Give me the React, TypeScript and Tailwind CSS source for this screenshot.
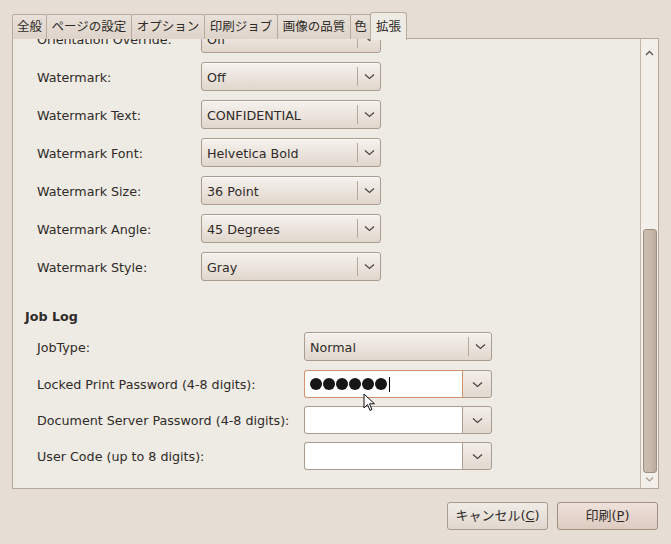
import React from 'react';

const font = { fontFamily: '"DejaVu Sans", "Noto Sans CJK JP", sans-serif' };

const tabs = [
  { label: '全般', w: 'w-[35px]' },
  { label: 'ページの設定', w: 'w-[86px]' },
  { label: 'オプション', w: 'w-[74px]' },
  { label: '印刷ジョブ', w: 'w-[74px]' },
  { label: '画像の品質', w: 'w-[74px]' },
  { label: '色', w: 'w-[21px]' },
];

const Chevron = () => (
  <svg width="11" height="7" viewBox="0 0 11 7" className="block">
    <path d="M1 1.5 L5.5 5.5 L10 1.5" fill="none" stroke="#4a4540" strokeWidth="1.2" />
  </svg>
);

const Combo = ({ value, w = 'w-[180px]' }: { value: string; w?: string }) => (
  <div className={`${w} h-[29px] flex items-center rounded-[3px] border border-[#aa9c8f] bg-gradient-to-b from-[#f5f1ed] via-[#ece5de] to-[#e0d6cc] shadow-[inset_0_1px_0_#fbf9f7]`}>
    <span className="flex-1 pl-[5px] pt-[2px] text-[12.7px] leading-[16px] text-[#2f2b28] truncate">{value}</span>
    <span className="w-px h-[19px] bg-[#b4a89c]" />
    <span className="w-[22px] flex justify-center">
      <Chevron />
    </span>
  </div>
);

const EntryCombo = ({ focused, children }: { focused?: boolean; children?: React.ReactNode }) => (
  <div className="w-[188px] h-[28px] flex rounded-[3px] border border-[#aa9c8f] bg-gradient-to-b from-[#f3eee9] to-[#e2d9cf]">
    <div
      className={`w-[159px] -m-px h-[28px] flex items-center pl-[5px] bg-white rounded-l-[3px] border ${
        focused ? 'border-[#d0916b]' : 'border-[#aa9c8f]'
      }`}
    >
      {children}
    </div>
    <span className="flex-1 flex items-center justify-center pl-[2px]">
      <Chevron />
    </span>
  </div>
);

const Label = ({ w, children }: { w: string; children: React.ReactNode }) => (
  <span className={`${w} pt-[2px] text-[12.7px] leading-[16px]`}>{children}</span>
);

const watermarkRows = [
  ['Orientation Override:', 'Off'],
  ['Watermark:', 'Off'],
  ['Watermark Text:', 'CONFIDENTIAL'],
  ['Watermark Font:', 'Helvetica Bold'],
  ['Watermark Size:', '36 Point'],
  ['Watermark Angle:', '45 Degrees'],
  ['Watermark Style:', 'Gray'],
];

export default function App() {
  return (
    <div className="relative w-[671px] h-[544px] bg-[#e6ded5] text-[#2f2b28] overflow-hidden" style={font}>
      {/* Tabs */}
      <div className="flex items-end pl-[12px] pt-[12px] h-[39px] relative z-10">
        {tabs.map(t => (
          <div
            key={t.label}
            className={`${t.w} h-[25px] flex items-center justify-center text-[12.5px] leading-[16px] whitespace-nowrap border border-b-0 border-[#b9ab9e] -ml-px first:ml-0 bg-gradient-to-b from-[#e9e2da] to-[#ddd3c9] rounded-t-[2px]`}
          >
            {t.label}
          </div>
        ))}
        <div className="w-[37px] h-[28px] -ml-px -mb-px flex items-center justify-center text-[12.5px] leading-[16px] border border-b-0 border-[#b9ab9e] bg-[#eeeae4] rounded-t-[3px]">
          拡張
        </div>
      </div>

      {/* Panel */}
      <div className="ml-[12px] w-[647px] h-[451px] -mt-px border border-[#b6a899] bg-[#eeeae4] flex">
        <div className="flex-1 overflow-hidden">
          <div className="-mt-[15px] pl-[24px] flex flex-col gap-[9px]">
            {watermarkRows.map(([label, value]) => (
              <div key={label} className="flex items-center h-[29px]">
                <Label w="w-[164px]">{label}</Label>
                <Combo value={value} />
              </div>
            ))}
          </div>

          <div className="pl-[12px] mt-[28px] h-[16px] flex items-center font-bold text-[12.7px]">Job Log</div>

          <div className="pl-[24px] mt-[7px] flex flex-col">
            <div className="flex items-center h-[29px]">
              <Label w="w-[267px]">JobType:</Label>
              <Combo value="Normal" w="w-[188px]" />
            </div>
            <div className="flex items-center h-[28px] mt-[9px]">
              <Label w="w-[267px]">Locked Print Password (4-8 digits):</Label>
              <EntryCombo focused>
                <div className="flex gap-[1px] items-center">
                  {[0, 1, 2, 3, 4, 5].map(i => (
                    <span key={i} className="w-[12px] h-[12px] rounded-full bg-[#161616]" />
                  ))}
                  <span className="ml-[1px] w-px h-[15px] bg-black" />
                </div>
              </EntryCombo>
            </div>
            <div className="flex items-center h-[28px] mt-[8px]">
              <Label w="w-[267px]">Document Server Password (4-8 digits):</Label>
              <EntryCombo />
            </div>
            <div className="flex items-center h-[28px] mt-[8px]">
              <Label w="w-[267px]">User Code (up to 8 digits):</Label>
              <EntryCombo />
            </div>
          </div>
        </div>

        {/* Scrollbar */}
        <div className="w-[18px] h-full border-l border-[#c4b6a9] bg-[#f3f0ec] flex flex-col items-center">
          <div className="h-[17px] flex items-end justify-center">
            <svg width="9" height="6" viewBox="0 0 9 6">
              <path d="M1 5 L4.5 1.5 L8 5" fill="none" stroke="#5a524b" strokeWidth="1.3" />
            </svg>
          </div>
          <div className="mt-[173px] w-[14px] h-[244px] rounded-[3px] border border-[#9d8f82] bg-gradient-to-r from-[#cbbdb0] via-[#c9baad] to-[#bcab9c]" />
          <div className="h-[12px] flex items-center justify-center">
            <svg width="9" height="6" viewBox="0 0 9 6">
              <path d="M1 1.5 L4.5 5 L8 1.5" fill="none" stroke="#a89b8f" strokeWidth="1.2" />
            </svg>
          </div>
        </div>
      </div>

      {/* Buttons */}
      <div className="flex justify-end gap-[9px] pr-[13px] mt-[13px]">
        <button className="w-[101px] h-[28px] rounded-[3px] border border-[#a99b8e] bg-gradient-to-b from-[#f1ece7] to-[#e0d7ce] text-[13px]">
          キャンセル(<span className="underline">C</span>)
        </button>
        <button className="w-[101px] h-[28px] rounded-[3px] border border-[#a08f82] bg-gradient-to-b from-[#efe2da] to-[#ddcbc0] text-[13px]">
          印刷(<span className="underline">P</span>)
        </button>
      </div>

      {/* Mouse pointer */}
      <svg className="absolute left-[363px] top-[393px]" width="13" height="19" viewBox="0 0 13 19">
        <path d="M1 1 L1 15 L4.5 11.5 L7 17.5 L9 16.5 L6.5 10.8 L11.5 10.8 Z" fill="#ffffff" stroke="#111" strokeWidth="1" strokeLinejoin="round" />
      </svg>
    </div>
  );
}
